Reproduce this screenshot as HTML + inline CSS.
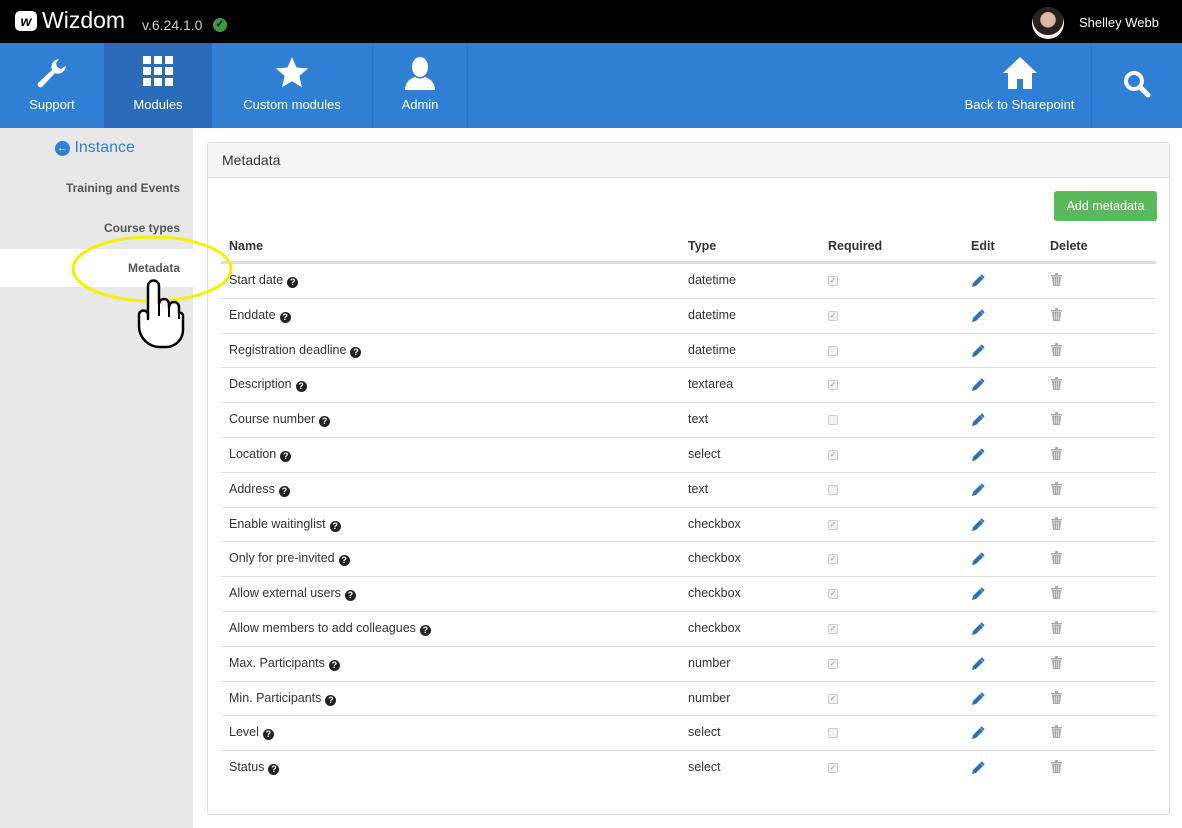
<!DOCTYPE html>
<html><head><meta charset="utf-8"><style>
*{box-sizing:border-box;margin:0;padding:0}
body{width:1182px;height:828px;overflow:hidden;background:#fff;font-family:"Segoe UI","Liberation Sans",sans-serif;position:relative;color:#333}
.abs{position:absolute}
#top{left:0;top:0;width:1182px;height:43px;background:#000}
#nav{left:0;top:43px;width:1182px;height:85px;background:#2f7fd4}
.tab{position:absolute;top:0;height:85px;color:#fff;font-size:13px;text-align:center}
.tab span{position:absolute;left:0;right:0;top:54px}
.tab svg{position:absolute;left:50%;transform:translateX(-50%);top:13px}
#side{left:0;top:128px;width:193px;height:700px;background:#e8e8e8}
.si{position:absolute;right:13px;font-size:12px;font-weight:bold;color:#555}
#panel{left:207px;top:142px;width:963px;height:673px;border:1px solid #ddd;border-radius:3px;background:#fff}
#ph{left:0;top:0;width:961px;height:35px;background:#f5f5f5;border-bottom:1px solid #ddd;font-size:14px;padding:9px 14px;color:#333}
.row{position:absolute;left:13px;width:935px;height:35px;border-top:1px solid #ddd;font-size:12.5px}
.row div{position:absolute;top:9px}
.q{display:inline-block;width:11px;height:11px;border-radius:50%;background:#222;color:#fff;font-size:9px;font-weight:bold;text-align:center;line-height:11px;margin-left:4px;vertical-align:-1px}
.cb{width:10px;height:10px;border:1px solid #ccc;background:#f2f2f2;border-radius:2px;font-size:8px;color:#999;line-height:8px;text-align:center}
</style></head><body>
<div id="top" class="abs">
  <div class="abs" style="left:15px;top:11px;width:22px;height:20px;background:#fff;border-radius:5px;color:#000;font-weight:bold;font-style:italic;font-size:14px;text-align:center;line-height:20px">w</div>
  <div class="abs" style="left:42px;top:7px;color:#fff;font-size:23px;font-family:'Liberation Sans',sans-serif">Wizdom</div>
  <div class="abs" style="left:142px;top:17px;color:#ccc;font-size:14px">v.6.24.1.0</div>
  <div class="abs" style="left:213px;top:18px;width:14px;height:14px;border-radius:50%;background:#3c9a3c;color:#000;font-size:10px;text-align:center;line-height:14px;font-weight:bold">✓</div>
  <div class="abs" style="left:1032px;top:7px;width:32px;height:32px;border-radius:50%;background:radial-gradient(circle at 50% 40%,#d9b8a8 0 30%,#2a2020 32% 60%,#f0f0f0 62%)"></div>
  <div class="abs" style="left:1079px;top:15px;color:#fff;font-size:13px">Shelley Webb</div>
</div>
<div id="nav" class="abs">
  <div class="tab" style="left:0;width:104px"><svg width="34" height="34" viewBox="0 0 34 34"><path d="M24 3a8 8 0 0 0-7 11L3 27a3 3 0 0 0 4 4l13-14a8 8 0 0 0 11-7l-5 3-4-2-1-4z" fill="#fff"/></svg><span>Support</span></div>
  <div class="tab" style="left:104px;width:108px;background:#2a6cb8"><svg width="30" height="30" viewBox="0 0 30 30" fill="#fff"><rect x="0" y="0" width="8" height="8"/><rect x="11" y="0" width="8" height="8"/><rect x="22" y="0" width="8" height="8"/><rect x="0" y="11" width="8" height="8"/><rect x="11" y="11" width="8" height="8"/><rect x="22" y="11" width="8" height="8"/><rect x="0" y="22" width="8" height="8"/><rect x="11" y="22" width="8" height="8"/><rect x="22" y="22" width="8" height="8"/></svg><span>Modules</span></div>
  <div class="tab" style="left:212px;width:160px"><svg width="34" height="32" viewBox="0 0 34 32"><path d="M17 1l4.5 10.5 11.5 1-8.7 7.5 2.7 11.3L17 25.3 7 31.3l2.7-11.3L1 12.5l11.5-1z" fill="#fff"/></svg><span>Custom modules</span></div>
  <div class="tab" style="left:372px;width:96px;border-left:1px solid #2b74c4;border-right:1px solid #2b74c4"><svg width="34" height="34" viewBox="0 0 34 34" fill="#fff"><ellipse cx="17" cy="11" rx="8" ry="10"/><path d="M2 34c0-8 6-12 10-13 3 2 7 2 10 0 4 1 10 5 10 13z"/></svg><span>Admin</span></div>
  <div class="tab" style="left:948px;width:144px;border-right:1px solid #2b74c4"><svg width="36" height="34" viewBox="0 0 36 34" fill="#fff"><path d="M18 1L1 17h5v16h9v-10h6v10h9V17h5z"/></svg><span>Back to Sharepoint</span></div>
  <div class="tab" style="left:1092px;width:90px"><svg width="28" height="28" viewBox="0 0 28 28" style="top:27px"><circle cx="11" cy="11" r="8" stroke="#fff" stroke-width="4" fill="none"/><path d="M17 17l8 8" stroke="#fff" stroke-width="5" stroke-linecap="round"/></svg></div>
</div>
<div id="side" class="abs">
  <div class="abs" style="left:55px;top:11px;font-size:16px;color:#2f7fd4"><span style="display:inline-block;width:15px;height:15px;border-radius:50%;background:#2f7fd4;color:#fff;font-size:11px;text-align:center;line-height:15px;font-weight:bold;vertical-align:1px">←</span> Instance</div>
  <div class="si" style="top:53px">Training and Events</div>
  <div class="si" style="top:93px">Course types</div>
  <div class="abs" style="left:0;top:121px;width:193px;height:38px;background:#fff"></div>
  <div class="si" style="top:133px">Metadata</div>
</div>
<div id="panel" class="abs">
  <div id="ph" class="abs">Metadata</div>
  <div class="abs" style="left:846px;top:48px;width:103px;height:30px;background:#5cb85c;border-radius:3px;color:#fff;font-size:12.5px;text-align:center;line-height:30px">Add metadata</div>
  <div class="abs" style="left:13px;top:93px;width:935px;height:27px;font-size:12.5px;font-weight:bold;border-bottom:2px solid #ddd">
    <div class="abs" style="left:8px;top:3px">Name</div>
    <div class="abs" style="left:467px;top:3px">Type</div>
    <div class="abs" style="left:607px;top:3px">Required</div>
    <div class="abs" style="left:750px;top:3px">Edit</div>
    <div class="abs" style="left:829px;top:3px">Delete</div>
  </div>
  <div id="rows"></div>
</div>
<svg class="abs" style="left:60px;top:225px;z-index:10" width="180" height="130" viewBox="60 225 180 130">
  <ellipse cx="152" cy="269" rx="79" ry="32" fill="none" stroke="#f5f000" stroke-width="3"/>
  <path d="M148 300V286a5.5 5.5 0 0 1 11 0v18a5 5 0 0 1 10 0v3a5 5 0 0 1 10 0v6a3 3 0 0 1 4 2v15a17 17 0 0 1-17 17h-6a21 21 0 0 1-21-21v-11a4.5 4.5 0 0 1 9 0v4z" fill="#fff" stroke="#000" stroke-width="2.5" stroke-linejoin="round"/>
  <path d="M159 304v12M169 307v10M179 313v6" stroke="#000" stroke-width="2"/>
</svg>
<script>
var d=[["Start date","datetime",1],["Enddate","datetime",1],["Registration deadline","datetime",0],["Description","textarea",1],["Course number","text",0],["Location","select",1],["Address","text",0],["Enable waitinglist","checkbox",1],["Only for pre-invited","checkbox",1],["Allow external users","checkbox",1],["Allow members to add colleagues","checkbox",1],["Max. Participants","number",1],["Min. Participants","number",1],["Level","select",0],["Status","select",1]];
var h="";
var pen='<svg width="14" height="14" viewBox="0 0 14 14"><path d="M1 13l1-4 7-7 3 3-7 7z" fill="#2f6fb8"/><path d="M10 1l3 3" stroke="#2f6fb8" stroke-width="2"/></svg>';
var tr='<svg width="11" height="13" viewBox="0 0 11 13" fill="#aaa"><rect x="0" y="2" width="11" height="1.5"/><rect x="4" y="0" width="3" height="2"/><path d="M1 4h9l-1 9H2z"/><path d="M3.5 5v7M5.5 5v7M7.5 5v7" stroke="#eee" stroke-width=".6"/></svg>';
d.forEach(function(r,i){var t=120+i*34.8;
h+='<div class="row" style="top:'+t+'px"><div style="left:8px">'+r[0]+'<span class="q">?</span></div><div style="left:467px">'+r[1]+'</div><div class="cb" style="left:607px;top:12px">'+(r[2]?'✓':'')+'</div><div style="left:750px;top:10px">'+pen+'</div><div style="left:830px;top:9px">'+tr+'</div></div>';});
document.getElementById("rows").innerHTML=h;
</script>
</body></html>
